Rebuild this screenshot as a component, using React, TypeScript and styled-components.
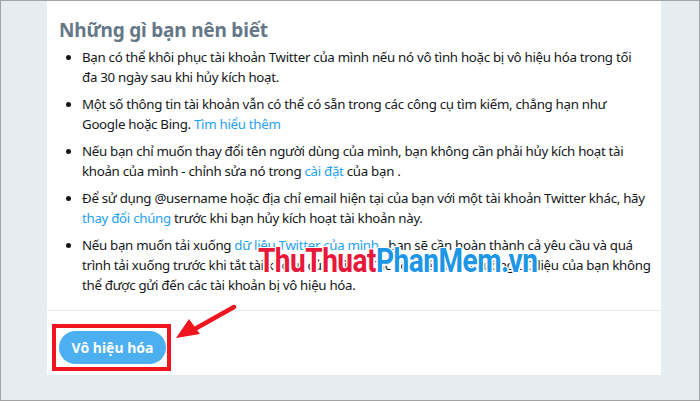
import React from "react";
import styled, { createGlobalStyle } from "styled-components";

const Global = createGlobalStyle`
  html, body { margin: 0; padding: 0; background: #fff; }
  * { box-sizing: border-box; }
`;

const Frame = styled.div`
  position: relative;
  width: 700px;
  height: 401px;
  border: 1px solid #a3a3a3;
  background: #e6ecf0;
  padding-left: 46px;
  overflow: hidden;
  font-family: "Noto Sans", "Open Sans", sans-serif;
`;

const Card = styled.div`
  width: 614px;
  height: 374px;
  background: #fff;
  display: flex;
  flex-direction: column;
`;

const Content = styled.section`
  height: 310px;
  padding: 16px 12px 0 12px;
  border-bottom: 1px solid #e6ecf0;
`;

const Heading = styled.h2`
  margin: 0 0 4px;
  font-size: 19px;
  line-height: 26px;
  font-weight: 700;
  color: #657786;
  letter-spacing: -0.2px;
`;

const List = styled.ul`
  margin: 0;
  padding: 0;
  list-style: none;
  display: flex;
  flex-direction: column;
  gap: 7px;
`;

const Item = styled.li`
  display: grid;
  grid-template-columns: 23px 1fr;
  font-size: 13.3px;
  letter-spacing: -0.3px;
  line-height: 20px;
  color: #14171a;
`;

const Text = styled.span`
  white-space: nowrap;
`;

const Dot = styled.span`
  display: flex;
  justify-content: flex-start;
  padding-left: 7px;
  padding-top: 8px;
  &::before {
    content: "";
    width: 5px;
    height: 5px;
    border-radius: 50%;
    background: #14171a;
  }
`;

const Link = styled.a`
  color: #1da1f2;
  text-decoration: none;
`;

const Footer = styled.footer`
  flex: 1;
  padding: 20px 0 0 12px;
`;

const ButtonWrap = styled.div`
  position: relative;
  display: inline-block;
`;

const Button = styled.button`
  height: 33px;
  width: 107px;
  border: none;
  border-radius: 17px;
  background: #4caff0;
  color: #fff;
  font-family: "Noto Sans", sans-serif;
  font-weight: 700;
  font-size: 14px;
  padding: 0;
`;

const Highlight = styled.span`
  position: absolute;
  left: -7px;
  top: -7px;
  width: 119px;
  height: 47px;
  border: 4px solid #f0141e;
  pointer-events: none;
`;

const Arrow = styled.svg`
  position: absolute;
  left: 170px;
  top: 300px;
`;

const Watermark = styled.div`
  position: absolute;
  left: 257px;
  top: 241px;
  font-family: "Roboto", "DejaVu Sans", sans-serif;
  font-weight: 700;
  font-size: 33px;
  line-height: 38px;
  letter-spacing: -0.6px;
  transform: scaleX(0.85);
  transform-origin: left center;
  white-space: nowrap;
  text-shadow: 1px 1px 0 #fff, -1px -1px 0 #fff, 1px -1px 0 #fff, -1px 1px 0 #fff,
    2px 0 0 #fff, -2px 0 0 #fff, 0 2px 0 #fff, 0 -1px 0 #fff;
`;

const Mark = styled.span<{ $tone: "red" | "blue" }>`
  color: ${(p) => (p.$tone === "red" ? "#e8183a" : "#1e96e6")};
`;

export default function App() {
  return (
    <>
      <Global />
      <Frame>
        <Card>
          <Content>
            <Heading>Những gì bạn nên biết</Heading>
            <List>
              <Item>
                <Dot />
                <Text>
                  Bạn có thể khôi phục tài khoản Twitter của mình nếu nó vô tình hoặc bị vô hiệu hóa trong tối
                  <br />
                  đa 30 ngày sau khi hủy kích hoạt.
                </Text>
              </Item>
              <Item>
                <Dot />
                <Text>
                  Một số thông tin tài khoản vẫn có thể có sẵn trong các công cụ tìm kiếm, chẳng hạn như
                  <br />
                  Google hoặc Bing. <Link>Tìm hiểu thêm</Link>
                </Text>
              </Item>
              <Item>
                <Dot />
                <Text>
                  Nếu bạn chỉ muốn thay đổi tên người dùng của mình, bạn không cần phải hủy kích hoạt tài
                  <br />
                  khoản của mình - chỉnh sửa nó trong <Link>cài đặt</Link> của bạn .
                </Text>
              </Item>
              <Item>
                <Dot />
                <Text>
                  Để sử dụng @username hoặc địa chỉ email hiện tại của bạn với một tài khoản Twitter khác, hãy
                  <br />
                  <Link>thay đổi chúng</Link> trước khi bạn hủy kích hoạt tài khoản này.
                </Text>
              </Item>
              <Item>
                <Dot />
                <Text>
                  Nếu bạn muốn tải xuống <Link>dữ liệu Twitter của mình</Link> , bạn sẽ cần hoàn thành cả yêu cầu và quá
                  <br />
                  trình tải xuống trước khi tắt tài khoản của mình. Các liên kết để tải xuống dữ liệu của bạn không
                  <br />
                  thể được gửi đến các tài khoản bị vô hiệu hóa.
                </Text>
              </Item>
            </List>
          </Content>
          <Footer>
            <ButtonWrap>
              <Button>Vô hiệu hóa</Button>
              <Highlight />
            </ButtonWrap>
          </Footer>
        </Card>
        <Watermark>
          <Mark $tone="red">ThuThuat</Mark>
          <Mark $tone="blue">PhanMem.vn</Mark>
        </Watermark>
        <Arrow width="70" height="45" viewBox="0 0 70 45">
          <line x1="63" y1="6" x2="22" y2="29" stroke="#f0141e" strokeWidth="4.5" strokeLinecap="round" />
          <polygon points="5,37 18,18 29,33" fill="#f0141e" />
        </Arrow>
      </Frame>
    </>
  );
}
